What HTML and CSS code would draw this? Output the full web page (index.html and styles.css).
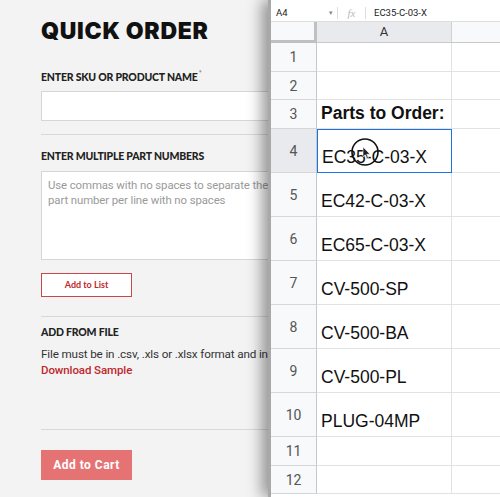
FILE: index.html
```html
<!DOCTYPE html>
<html lang="en">
<head>
  <meta charset="UTF-8" />
  <meta name="viewport" content="width=device-width, initial-scale=1.0" />
  <title>Quick Order</title>
  <link rel="stylesheet" href="styles.css">
</head>
<body>
  <div class="page">
    <div class="order">
      <div class="form">
        <h1>QUICK ORDER</h1>
        <label class="label">ENTER SKU OR PRODUCT NAME<sup>*</sup></label>
        <input type="text" class="field" />
        <hr />
        <label class="label">ENTER MULTIPLE PART NUMBERS</label>
        <textarea class="area" placeholder="Use commas with no spaces to separate the part numbers or enter one part number per line with no spaces"></textarea>
        <button class="btn-outline">Add to List</button>
        <hr class="rule-file" />
        <label class="label">ADD FROM FILE</label>
        <p class="note">File must be in .csv, .xls or .xlsx format and include SKU and quantity</p>
        <a href="#" class="sample">Download Sample</a>
        <hr class="rule-cart" />
        <button class="btn-cart">Add to Cart</button>
      </div>
    </div>

    <div class="sheet">
      <div class="formula">
        <span class="ref">A4</span>
        <span class="caret">▾</span>
        <span class="fx">fx</span>
        <span class="value">EC35-C-03-X</span>
      </div>
      <div class="grid">
        <div class="corner"></div>
        <div class="colhead active">A</div>
        <div class="colhead"></div>

        <div class="rowhead">1</div><div class="cell"></div><div class="cell"></div>
        <div class="rowhead">2</div><div class="cell"></div><div class="cell"></div>
        <div class="rowhead">3</div><div class="cell bold">Parts to Order:</div><div class="cell"></div>
        <div class="rowhead active">4</div>
        <div class="cell selected">EC35-C-03-X
          <span class="cursor">
            <svg width="30" height="30" viewBox="0 0 30 30">
              <circle cx="15" cy="15" r="13" fill="none" stroke="#111" stroke-width="1.6"/>
              <path d="M13 10 L13 20 L15.3 17.8 L17 21.5 L18.4 20.9 L16.8 17.3 L20 17.2 Z" fill="#222" stroke="#fff" stroke-width="0.6"/>
            </svg>
          </span>
        </div>
        <div class="cell"></div>
        <div class="rowhead">5</div><div class="cell">EC42-C-03-X</div><div class="cell"></div>
        <div class="rowhead">6</div><div class="cell">EC65-C-03-X</div><div class="cell"></div>
        <div class="rowhead">7</div><div class="cell">CV-500-SP</div><div class="cell"></div>
        <div class="rowhead">8</div><div class="cell">CV-500-BA</div><div class="cell"></div>
        <div class="rowhead">9</div><div class="cell">CV-500-PL</div><div class="cell"></div>
        <div class="rowhead">10</div><div class="cell">PLUG-04MP</div><div class="cell"></div>
        <div class="rowhead">11</div><div class="cell"></div><div class="cell"></div>
        <div class="rowhead">12</div><div class="cell"></div><div class="cell"></div>
      </div>
    </div>
  </div>
</body>
</html>
```

FILE: styles.css
```css
* {
  box-sizing: border-box;
}
body {
  margin: 0;
  background: #f3f3f3;
  font-family: Roboto, Arial, sans-serif;
  color: #333;
  overflow: hidden;
}
.page {
  display: flex;
  width: 500px;
  height: 497px;
  overflow: hidden;
}
.order {
  width: 268px;
  flex-shrink: 0;
  overflow: hidden;
  background: #f3f3f3;
}
.form {
  width: 480px;
  padding: 17px 0 0 41px;
}
h1 {
  margin: 0 0 21px;
  font-family: Inter, Lato, sans-serif;
  font-weight: 900;
  font-size: 23px;
  letter-spacing: 0.7px;
  line-height: 28px;
  color: #111;
}
.label {
  display: block;
  font-family: Lato, sans-serif;
  font-weight: 900;
  font-size: 10.5px;
  letter-spacing: -0.2px;
  color: #222;
  line-height: 14px;
}
.label sup {
  font-size: 7px;
  color: #888;
  margin-left: 1px;
}
.field {
  display: block;
  width: 420px;
  height: 30px;
  margin: 7px 0 13px;
  border: 1px solid #d6d6d6;
  background: #fff;
}
hr {
  border: 0;
  border-top: 1px solid #d8d8d8;
  margin: 0 0 14px;
  width: 420px;
}
.area {
  display: block;
  width: 370px;
  height: 89px;
  margin: 8px 0 13px;
  padding: 6px 6px;
  border: 1px solid #d6d6d6;
  background: #fff;
  resize: none;
  font-family: Roboto, sans-serif;
  font-size: 11.4px;
  letter-spacing: -0.1px;
  line-height: 15px;
  color: #999;
}
.area::placeholder {
  color: #9a9a9a;
}
.btn-outline {
  display: block;
  width: 91px;
  height: 24px;
  border: 1px solid #c9474b;
  background: #fff;
  color: #c0272d;
  font-family: Lato, sans-serif;
  font-weight: 700;
  font-size: 9px;
  padding: 0;
}
.rule-file {
  margin: 19px 0 8px;
}
.note {
  margin: 8px 0 0;
  font-size: 11.7px;
  letter-spacing: -0.15px;
  line-height: 15px;
  color: #333;
  white-space: nowrap;
}
.sample {
  display: block;
  font-size: 11.5px;
  line-height: 16px;
  color: #c0272d;
  font-weight: 500;
  letter-spacing: -0.1px;
  text-decoration: none;
}
.rule-cart {
  margin: 51px 0 20px;
}
.btn-cart {
  display: block;
  width: 91px;
  height: 30px;
  border: 0;
  background: #e57373;
  color: #fff;
  font-family: Roboto, sans-serif;
  font-weight: 700;
  font-size: 12px;
  letter-spacing: 0.5px;
  padding: 0;
}
.sheet {
  flex: 1;
  background: #fff;
  border-left: 3px solid #a9a9a9;
  box-shadow: -6px 0 14px rgba(0, 0, 0, 0.4);
  font-family: Roboto, Arial, sans-serif;
}
.formula {
  display: flex;
  align-items: center;
  height: 21px;
  margin-top: 1px;
  padding-top: 3px;
  border-bottom: 1px solid #ddd;
  font-size: 9.5px;
  color: #222;
}
.ref {
  width: 58px;
  padding-left: 5px;
}
.caret {
  font-size: 7px;
  color: #888;
  width: 9px;
  border-right: 1px solid #ddd;
  height: 12px;
  line-height: 12px;
}
.fx {
  font-family: "Liberation Serif", serif;
  font-style: italic;
  color: #bbb;
  font-size: 11px;
  width: 28px;
  text-align: center;
  border-right: 1px solid #ddd;
  height: 12px;
  line-height: 12px;
}
.value {
  padding-left: 8px;
}
.grid {
  display: grid;
  grid-template-columns: 46px 135px 60px;
  grid-template-rows: 21px 29px 28px 29px repeat(7, 44px) 29px 28px;
}
.corner {
  background: #f8f9fa;
  border-right: 3px solid #c0c0c0;
  border-bottom: 3px solid #c0c0c0;
}
.colhead {
  background: #f8f9fa;
  border-right: 1px solid #d0d0d0;
  border-bottom: 1px solid #c8c8c8;
  text-align: center;
  font-size: 13px;
  line-height: 20px;
  color: #555;
}
.colhead.active {
  background: #e8eaed;
  color: #333;
}
.rowhead {
  background: #f8f9fa;
  border-right: 1px solid #c8c8c8;
  border-bottom: 1px solid #d6d6d6;
  font-size: 14px;
  color: #555;
  display: flex;
  align-items: center;
  justify-content: center;
}
.rowhead.active {
  background: #e8eaed;
}
.cell {
  border-right: 1px solid #e2e2e2;
  border-bottom: 1px solid #e2e2e2;
  font-family: "Liberation Sans", Arial, sans-serif;
  font-size: 17.5px;
  color: #111;
  padding: 0 4px 4px;
  display: flex;
  align-items: flex-end;
  white-space: nowrap;
  position: relative;
}
.cell.bold {
  font-weight: 700;
}
.cell.selected {
  border: 1.5px solid #1a73e8;
}
.cursor {
  position: absolute;
  left: 32px;
  top: 7px;
  width: 30px;
  height: 30px;
}
```
